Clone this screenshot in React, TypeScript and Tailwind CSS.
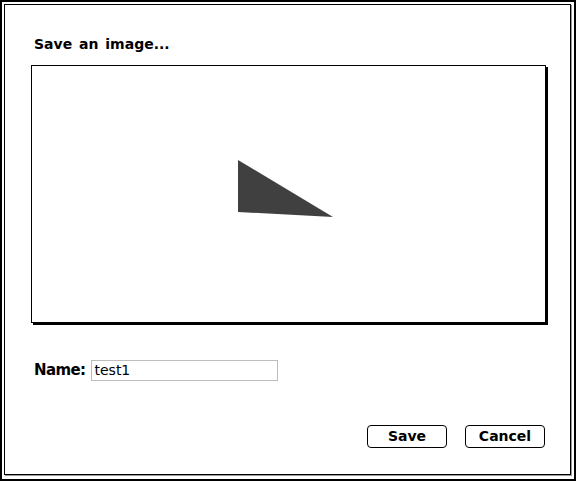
export default function App() {
  const chicago = { fontFamily: '"DejaVu Sans", "Liberation Sans", sans-serif' };
  return (
    <div className="w-[576px] h-[481px] bg-white border-2 border-black p-[2px]">
      <div className="w-[567px] h-[471px] border border-black shadow-[1px_1px_0_#9a9a9a] pl-[26px] pt-[31px] flex flex-col">
        <h1
          className="ml-[3px] text-[14px] leading-[16px] font-bold text-black [word-spacing:2px]"
          style={chicago}
        >
          Save an image...
        </h1>
        <div className="mt-[13px] w-[515px] h-[258px] border border-black shadow-[2px_2px_0_#000] bg-white">
          <svg width="513" height="256" viewBox="0 0 513 256">
            <polygon points="206,94 206,146 301,151" fill="#404040" />
          </svg>
        </div>
        <div className="mt-[36px] ml-[3px] flex items-center gap-[6px]">
          <label className="text-[15px] font-bold text-black tracking-[-0.6px]" style={{ fontFamily: '"DejaVu Sans", sans-serif' }}>
            Name:
          </label>
          <input
            defaultValue="test1"
            className="w-[187px] h-[21px] border border-[#bdbdbd] px-[2px] text-[14px] text-black outline-none"
            style={{ fontFamily: '"DejaVu Sans", sans-serif' }}
          />
        </div>
        <div className="mt-[43px] flex justify-end gap-[18px] pr-[25px]">
          <button
            className="w-[80px] h-[23px] border border-black rounded-[4px] text-[14px] font-bold text-black leading-none"
            style={chicago}
          >
            Save
          </button>
          <button
            className="w-[80px] h-[23px] border border-black rounded-[4px] text-[14px] font-bold text-black leading-none"
            style={chicago}
          >
            Cancel
          </button>
        </div>
      </div>
    </div>
  );
}
